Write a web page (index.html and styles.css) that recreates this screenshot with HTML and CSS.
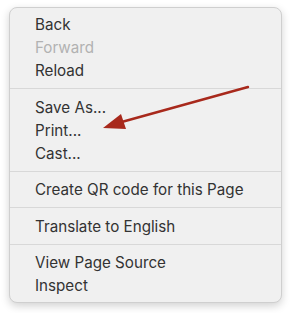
FILE: index.html
```html
<!DOCTYPE html>
<html lang="en">

<head>
  <meta charset="UTF-8">
  <meta name="viewport" content="width=device-width, initial-scale=1.0">
  <title>Context menu</title>
  <link rel="stylesheet" href="styles.css">
</head>

<body>
  <div class="stage">
    <!-- context menu -->
    <div class="menu">
      <div class="item">Back</div>
      <div class="item disabled">Forward</div>
      <div class="item">Reload</div>
      <div class="sep"></div>
      <div class="item">Save As...</div>
      <div class="item">Print...</div>
      <div class="item">Cast...</div>
      <div class="sep"></div>
      <div class="item">Create QR code for this Page</div>
      <div class="sep"></div>
      <div class="item">Translate to English</div>
      <div class="sep"></div>
      <div class="item">View Page Source</div>
      <div class="item">Inspect</div>
    </div>

    <!-- annotation arrow -->
    <svg class="arrow" width="296" height="313" viewBox="0 0 296 313">
      <line x1="248" y1="87" x2="118" y2="123" stroke="#a8291c" stroke-width="2.4" stroke-linecap="round" />
      <polygon points="103,128 121,114 126,129" fill="#a8291c" />
    </svg>
  </div>
</body>

</html>
```

FILE: styles.css
```css
* {
  margin: 0;
  padding: 0;
  box-sizing: border-box;
}

body {
  font-family: 'Inter', 'Liberation Sans', Arial, sans-serif;
  background: #ffffff;
  width: 296px;
  height: 313px;
  overflow: hidden;
}

.stage {
  position: relative;
  width: 296px;
  height: 313px;
  padding: 7px 14px 0 9px;
}

.menu {
  width: 273px;
  background: #f0f0f0;
  border: 1px solid #cfcfcf;
  border-radius: 8px;
  box-shadow: 0 3px 8px rgba(0, 0, 0, 0.18);
  padding: 5px 0 5px;
}

.item {
  height: 23px;
  line-height: 23px;
  padding-left: 25px;
  font-size: 15.2px;
  color: #333333;
  white-space: nowrap;
}

.item.disabled {
  color: #b2b2b2;
}

.sep {
  height: 1px;
  background: #d8d8d8;
  margin: 6px 0 6.5px;
}

.arrow {
  position: absolute;
  top: 0;
  left: 0;
  pointer-events: none;
}
```
